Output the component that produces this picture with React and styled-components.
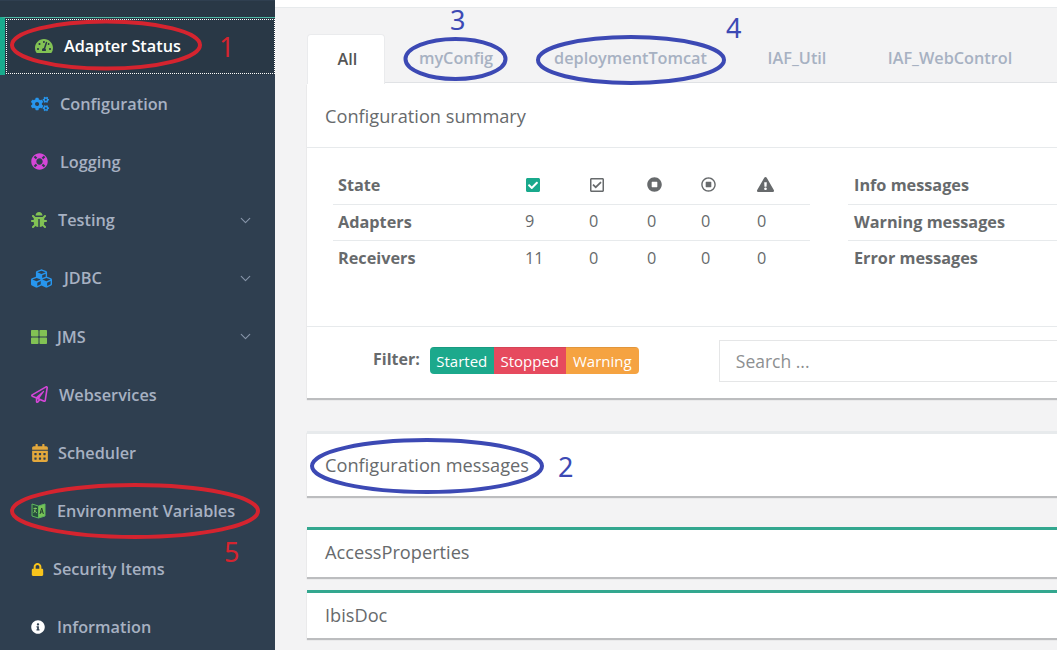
import React from "react";
import styled, { createGlobalStyle } from "styled-components";
import {
  FaTachometerAlt, FaCogs, FaLifeRing, FaBug, FaCubes, FaThLarge, FaRegPaperPlane,
  FaCalendarAlt, FaLock, FaInfoCircle, FaCheckSquare, FaRegCheckSquare, FaStopCircle,
  FaRegStopCircle, FaExclamationTriangle,
} from "react-icons/fa";
import { ChevronDown } from "lucide-react";

const Global = createGlobalStyle`
  html, body { margin: 0; padding: 0; height: 650px; overflow: hidden; background: #f3f3f4; }
  * { box-sizing: border-box; }
  body { font-family: "Open Sans", "Liberation Sans", sans-serif; color: #676a6c; }
`;

const Page = styled.div`
  position: relative;
  display: flex;
  width: 1057px;
  height: 650px;
  overflow: hidden;
`;

const Sidebar = styled.nav`
  flex: 0 0 275px;
  height: 650px;
  padding-top: 1px;
  background: #2f3f50;
  display: flex;
  flex-direction: column;
  overflow: hidden;
`;

const SideHead = styled.div`
  flex: none;
  height: 16px;
  background: #293846;
`;

const NavItem = styled.a`
  height: 58.2px;
  flex: none;
  display: flex;
  align-items: center;
  padding-left: 31px;
  padding-right: 21.5px;
  font-size: 16.25px;
  font-weight: 600;
  color: #a7b1c2;
  svg.lead { flex: none; color: ${(p) => p.$icon}; }
`;

const ActiveItem = styled(NavItem)`
  height: 57.7px;
  color: #fff;
  background: #293846;
  border-left: 5px solid #19aa8d;
  border-top: 1px solid #4fb8a3;
  position: relative;
  padding-left: 30px;
  padding-bottom: 1px;
  &::after {
    content: "";
    position: absolute;
    inset: 1px 0 1px 1px;
    border: 1px dotted #fff;
  }
`;

const Label = styled.span`
  margin-left: ${(p) => p.$gap}px;
  flex: 1;
  white-space: nowrap;
`;

const Caret = styled(ChevronDown)`
  flex: none;
  color: #8795a8;
`;

const Main = styled.main`
  flex: 1;
  min-width: 0;
  background: #f3f3f4;
  padding-left: 32px;
`;

const TopBar = styled.div`
  height: 8px;
  margin-left: -32px;
  background: #fff;
  border-bottom: 1px solid #e7eaec;
`;

const Tabs = styled.div`
  margin-top: 26px;
  height: 49px;
  display: flex;
  border-bottom: 1px solid #e0e2e5;
  font-size: 16.25px;
  font-weight: 600;
`;

const Tab = styled.div`
  flex: none;
  width: ${(p) => p.$w}px;
  height: 50px;
  display: flex;
  align-items: center;
  justify-content: center;
  padding: ${(p) => (p.$active ? "0 0 2px 3px" : "0 0 2px 0")};
  color: ${(p) => (p.$active ? "#555" : "#a7b1c2")};
  background: ${(p) => (p.$active ? "#fff" : "transparent")};
  border-radius: 4px 4px 0 0;
  border: ${(p) => (p.$active ? "1px solid #eaebed" : "none")};
  border-bottom: none;
`;

const Card = styled.section`
  background: #fff;
  margin-bottom: ${(p) => p.$mb ?? 0}px;
  border-top: ${(p) => p.$top || "none"};
  box-shadow: 0 2px 1px 0 #bcbdbf;
`;

const CardTitle = styled.h2`
  margin: 0;
  height: ${(p) => p.$h}px;
  display: flex;
  align-items: center;
  padding: ${(p) => p.$pt ?? 0}px 0 ${(p) => p.$pb ?? 0}px 18px;
  font-size: 18.2px;
  font-weight: 500;
  color: #676a6c;
  border-bottom: ${(p) => (p.$line ? "1px solid #e7eaec" : "none")};
`;

const SummaryBody = styled.div`
  height: 179px;
  padding: 19px 0 0 26px;
  display: flex;
  gap: 38px;
  border-bottom: 1px solid #e7eaec;
`;

const StateTable = styled.div`
  flex: 0 0 477px;
`;

const MsgTable = styled.div`
  flex: 1;
`;

const TRow = styled.div`
  height: ${(p) => (p.$head ? 38 : 36)}px;
  display: grid;
  grid-template-columns: ${(p) => p.$cols || "1fr"};
  align-items: center;
  padding: 0 0 2px ${(p) => p.$inset ?? 5}px;
  font-size: 16.25px;
  border-bottom: ${(p) => (p.$line ? "1px solid #e7eaec" : "none")};
`;

const RowHead = styled.span`
  font-weight: 700;
  color: #676a6c;
  white-space: nowrap;
`;

const Cell = styled.span`
  color: ${(p) => p.$c || "#676a6c"};
  display: flex;
  align-items: center;
  line-height: 1;
`;

const FilterRow = styled.div`
  height: 71px;
  display: flex;
  align-items: center;
  padding: 0 0 4px 66px;
`;

const FilterLabel = styled.span`
  font-size: 16px;
  font-weight: 700;
  color: #676a6c;
  margin: -4px 10px 0 0;
`;

const BtnGroup = styled.div`
  display: flex;
  height: 27px;
  border-radius: 4px;
  overflow: hidden;
`;

const FilterBtn = styled.span`
  width: ${(p) => p.$w}px;
  display: flex;
  align-items: center;
  justify-content: center;
  font-size: 15px;
  color: #fff;
  background: ${(p) => p.$bg};
  border-top: 1px solid rgba(0, 0, 0, 0.08);
`;

const Search = styled.div`
  flex: 1;
  margin-left: 80px;
  height: 42px;
  display: flex;
  align-items: center;
  padding-left: 16px;
  font-size: 17.5px;
  color: #8d8f91;
  border: 1px solid #e5e6e7;
  border-right: none;
`;

const Marks = styled.svg`
  position: absolute;
  inset: 0;
  width: 1057px;
  height: 650px;
  pointer-events: none;
`;

const Num = styled.span`
  position: absolute;
  left: ${(p) => p.$x}px;
  top: ${(p) => p.$y}px;
  font-size: 27px;
  line-height: 36px;
  color: ${(p) => (p.$red ? "#d5242f" : "#3c49b4")};
  font-family: "Noto Sans", "Open Sans", sans-serif;
`;

const MapIcon = () => (
  <svg className="lead" width="15" height="16" viewBox="0 0 15 16" fill="none">
    <path d="M7.5 3 1 1v12l6.500 2z" fill="#274f3e" stroke="#5cb85c" strokeWidth="1" />
    <path d="M7.500 3 14 1v12l-6.500 2z" fill="#78c257" stroke="#5cb85c" strokeWidth="1" />
    <path d="M2.500 5.500h3.500M4.200 4.500c0 3-.6 4.500-1.700 5.500M3.400 7c.6 1.300 1.400 2.300 2.600 3" stroke="#8fd06b" strokeWidth=".8" />
    <path d="M9 11l1.700-6 1.700 6M9.600 9h2.200" stroke="#23402f" strokeWidth="1" />
  </svg>
);

const items = [
  { label: "Configuration", Icon: FaCogs, c: "#2796ee", s: 18, gap: 11 },
  { label: "Logging", Icon: FaLifeRing, c: "#d546d8", s: 17, gap: 12 },
  { label: "Testing", Icon: FaBug, c: "#82c254", s: 16, gap: 11, caret: true },
  { label: "JDBC", Icon: FaCubes, c: "#2796ee", s: 21, gap: 12, caret: true },
  { label: "JMS", Icon: FaThLarge, c: "#82c254", s: 16, gap: 10, caret: true },
  { label: "Webservices", Icon: FaRegPaperPlane, c: "#d546d8", s: 17, gap: 11 },
  { label: "Scheduler", Icon: FaCalendarAlt, c: "#e3a83c", s: 18, gap: 9 },
  { label: "Environment Variables", map: true, c: "#5cb85c", gap: 11 },
  { label: "Security Items", Icon: FaLock, c: "#f8c41c", s: 13, gap: 9 },
  { label: "Information", Icon: FaInfoCircle, c: "#fff", s: 14, gap: 12 },
];

const COLS = "187px 64px 58px 54px 56px 1fr";

const ellipses = [
  { cx: 106, cy: 45, rx: 94, ry: 23.5, c: "#d5242f" },
  { cx: 135, cy: 511, rx: 123, ry: 26, c: "#d5242f" },
  { cx: 455.500, cy: 59, rx: 50, ry: 20, c: "#3c49b4" },
  { cx: 631, cy: 60, rx: 93, ry: 23, c: "#3c49b4" },
  { cx: 427, cy: 466, rx: 115, ry: 26, c: "#3c49b4" },
];

const nums = [
  { t: "1", x: 219, y: 29, red: true },
  { t: "5", x: 224, y: 534, red: true },
  { t: "3", x: 450, y: 2, red: false },
  { t: "4", x: 726, y: 10, red: false },
  { t: "2", x: 558, y: 449, red: false },
];

export default function App() {
  return (
    <Page>
      <Global />
      <Sidebar>
        <SideHead />
        <ActiveItem $icon="#82c254">
          <FaTachometerAlt className="lead" size={18} />
          <Label $gap={11}>Adapter Status</Label>
        </ActiveItem>
        {items.map(({ label, Icon, c, s, gap, caret, map }) => (
          <NavItem key={label} $icon={c}>
            {map ? <MapIcon /> : <Icon className="lead" size={s} />}
            <Label $gap={gap}>{label}</Label>
            {caret && <Caret size={17} strokeWidth={1.6} />}
          </NavItem>
        ))}
      </Sidebar>
      <Main>
        <TopBar />
        <Tabs>
          <Tab $active $w={78}>All</Tab>
          <Tab $w={142}>myConfig</Tab>
          <Tab $w={207}>deploymentTomcat</Tab>
          <Tab $w={126}>IAF_Util</Tab>
          <Tab $w={180}>IAF_WebControl</Tab>
        </Tabs>
        <Card $mb={33}>
          <CardTitle $h={65} $line $pt={1}>Configuration summary</CardTitle>
          <SummaryBody>
            <StateTable>
              <TRow $head $line $cols={COLS}>
                <RowHead>State</RowHead>
                <Cell $c="#19a98c"><FaCheckSquare size={16} /></Cell>
                <Cell><FaRegCheckSquare size={16} /></Cell>
                <Cell><FaStopCircle size={15} /></Cell>
                <Cell><FaRegStopCircle size={15} /></Cell>
                <Cell><FaExclamationTriangle size={17} /></Cell>
              </TRow>
              <TRow $line $cols={COLS}>
                <RowHead>Adapters</RowHead>
                <Cell>9</Cell><Cell>0</Cell><Cell>0</Cell><Cell>0</Cell><Cell>0</Cell>
              </TRow>
              <TRow $cols={COLS}>
                <RowHead>Receivers</RowHead>
                <Cell>11</Cell><Cell>0</Cell><Cell>0</Cell><Cell>0</Cell><Cell>0</Cell>
              </TRow>
            </StateTable>
            <MsgTable>
              <TRow $head $line $inset={6}><RowHead>Info messages</RowHead></TRow>
              <TRow $line $inset={6}><RowHead>Warning messages</RowHead></TRow>
              <TRow $inset={6}><RowHead>Error messages</RowHead></TRow>
            </MsgTable>
          </SummaryBody>
          <FilterRow>
            <FilterLabel>Filter:</FilterLabel>
            <BtnGroup>
              <FilterBtn $w={64} $bg="#1ca98c">Started</FilterBtn>
              <FilterBtn $w={72} $bg="#e64a5e">Stopped</FilterBtn>
              <FilterBtn $w={73} $bg="#f5a341">Warning</FilterBtn>
            </BtnGroup>
            <Search>Search ...</Search>
          </FilterRow>
        </Card>
        <Card $mb={31} $top="3px solid #e7eaec">
          <CardTitle $h={62}>Configuration messages</CardTitle>
        </Card>
        <Card $mb={13} $top="3px solid #33a78f">
          <CardTitle $h={47} $pb={3}>AccessProperties</CardTitle>
        </Card>
        <Card $top="3px solid #33a78f">
          <CardTitle $h={45} $pb={2}>IbisDoc</CardTitle>
        </Card>
      </Main>
      <Marks viewBox="0 0 1057 650">
        {ellipses.map((e) => (
          <ellipse key={e.cx} cx={e.cx} cy={e.cy} rx={e.rx} ry={e.ry} fill="none" stroke={e.c} strokeWidth="4" />
        ))}
      </Marks>
      {nums.map((n) => (
        <Num key={n.t} $x={n.x} $y={n.y} $red={n.red}>{n.t}</Num>
      ))}
    </Page>
  );
}
